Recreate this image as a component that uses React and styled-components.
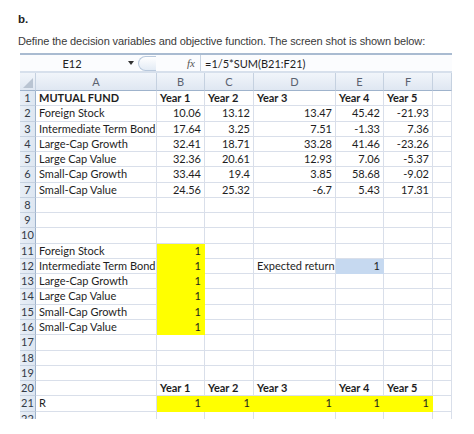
import React from 'react'
import styled, { createGlobalStyle } from 'styled-components'

const Global = createGlobalStyle`
  html, body { margin: 0; padding: 0; background: #ffffff; }
`

const Page = styled.div`
  width: 474px;
  height: 434px;
  overflow: hidden;
  padding: 12px 0 0 18px;
  box-sizing: border-box;
  font-family: 'Liberation Sans', Arial, sans-serif;
`

const Part = styled.div`
  font-size: 11.5px;
  font-weight: bold;
  color: #222;
  line-height: 14px;
`

const Question = styled.div`
  margin-top: 8px;
  font-size: 11px;
  color: #3a3a3a;
  line-height: 14px;
  letter-spacing: -0.1px;
`

const Sheet = styled.div`
  margin: 5px 0 0 2px;
  width: 432px;
  height: 366px;
  overflow: hidden;
  font-family: 'Lato', 'Open Sans', sans-serif;
  font-size: 11px;
  color: #1e1e1e;
`

const FormulaBar = styled.div`
  display: flex;
  align-items: center;
  height: 16px;
  border-top: 2px solid #a9bbd1;
  border-bottom: 2px solid #d7e0ec;
  background: #fbfcfe;
`

const NameBox = styled.div`
  width: 104px;
  text-align: center;
  color: #222;
`

const Drop = styled.div`
  width: 0;
  height: 0;
  border-left: 3px solid transparent;
  border-right: 3px solid transparent;
  border-top: 4px solid #333;
  margin: 0 4px 0 4px;
`

const Knob = styled.div`
  width: 17px;
  height: 13px;
  border: 1px solid #b8c8dc;
  border-right: none;
  border-radius: 8px 0 0 8px;
  background: linear-gradient(#ffffff, #e3ebf5);
`

const Fx = styled.div`
  width: 39px;
  text-align: right;
  padding-right: 5px;
  font-family: 'Liberation Serif', serif;
  font-style: italic;
  font-size: 11px;
  color: #555;
  border-right: 1px solid #c6d2e1;
  height: 16px;
  line-height: 16px;
`

const Formula = styled.div`
  padding-left: 4px;
  color: #1e1e1e;
`

const Grid = styled.div`
  display: grid;
  grid-template-columns: 16px 121px 48px 49px 82px 48px 49px 19px;
`

const Head = styled.div`
  height: 17px;
  line-height: 17px;
  text-align: center;
  color: #5a6270;
  background: linear-gradient(#f1f5fa, #dfe7f2);
  border-right: 1px solid #c5d1e0;
  border-bottom: 1px solid #9fb3cc;
`

const Corner = styled(Head)`
  position: relative;
  &::after {
    content: '';
    position: absolute;
    right: 2px;
    bottom: 2px;
    width: 0;
    height: 0;
    border-left: 10px solid transparent;
    border-bottom: 10px solid #b9c4d2;
  }
`

const RowNum = styled.div`
  height: 14.27px;
  line-height: 14.27px;
  text-align: center;
  color: #333a46;
  background: linear-gradient(90deg, #e9eff7, #dde6f1);
  border-right: 1px solid #9fb3cc;
  border-bottom: 1px solid #c5d1e0;
`

const Cell = styled.div`
  height: 14.27px;
  line-height: 14.27px;
  padding: 0 3px;
  white-space: nowrap;
  overflow: hidden;
  text-align: ${p => (p.$num ? 'right' : 'left')};
  font-weight: ${p => (p.$bold ? 'bold' : 'normal')};
  background: ${p => p.$fill || '#ffffff'};
  border-right: 1px solid ${p => (p.$fill ? p.$fill : '#d9dfea')};
  border-bottom: 1px solid ${p => (p.$fill ? p.$fill : '#d9dfea')};
`

const YELLOW = '#ffff00'
const BLUE = '#c6d9f0'

const years = ['Year 1', 'Year 2', 'Year 3', 'Year 4', 'Year 5']
const funds = [
  ['Foreign Stock', '10.06', '13.12', '13.47', '45.42', '-21.93'],
  ['Intermediate Term Bond', '17.64', '3.25', '7.51', '-1.33', '7.36'],
  ['Large-Cap Growth', '32.41', '18.71', '33.28', '41.46', '-23.26'],
  ['Large Cap Value', '32.36', '20.61', '12.93', '7.06', '-5.37'],
  ['Small-Cap Growth', '33.44', '19.4', '3.85', '58.68', '-9.02'],
  ['Small-Cap Value', '24.56', '25.32', '-6.7', '5.43', '17.31'],
]

const blank = () => Array.from({ length: 7 }, () => ({}))

const rows = []
rows.push([{ t: 'MUTUAL FUND', bold: true }, ...years.map(y => ({ t: y, bold: true })), {}])
funds.forEach(f => rows.push([{ t: f[0] }, ...f.slice(1).map(v => ({ t: v, num: true })), {}]))
rows.push(blank(), blank(), blank())
funds.forEach((f, i) => {
  const r = [{ t: f[0] }, { t: '1', num: true, fill: YELLOW }, {}, {}, {}, {}, {}]
  if (i === 1) {
    r[3] = { t: 'Expected return' }
    r[4] = { t: '1', num: true, fill: BLUE }
  }
  rows.push(r)
})
rows.push(blank(), blank(), blank())
rows.push([{}, ...years.map(y => ({ t: y, bold: true })), {}])
rows.push([{ t: 'R' }, ...years.map(() => ({ t: '1', num: true, fill: YELLOW })), {}])
rows.push(blank())

export default function App() {
  return (
    <>
      <Global />
      <Page>
        <Part>b.</Part>
        <Question>Define the decision variables and objective function. The screen shot is shown below:</Question>
        <Sheet>
          <FormulaBar>
            <NameBox>E12</NameBox>
            <Drop />
            <Knob />
            <Fx>fx</Fx>
            <Formula>=1/5*SUM(B21:F21)</Formula>
          </FormulaBar>
          <Grid>
            <Corner />
            {['A', 'B', 'C', 'D', 'E', 'F', ''].map((h, i) => (
              <Head key={i}>{h}</Head>
            ))}
            {rows.map((r, i) => (
              <React.Fragment key={i}>
                <RowNum>{i + 1}</RowNum>
                {r.map((c, j) => (
                  <Cell key={j} $num={c.num} $bold={c.bold} $fill={c.fill}>
                    {c.t}
                  </Cell>
                ))}
              </React.Fragment>
            ))}
          </Grid>
        </Sheet>
      </Page>
    </>
  )
}
